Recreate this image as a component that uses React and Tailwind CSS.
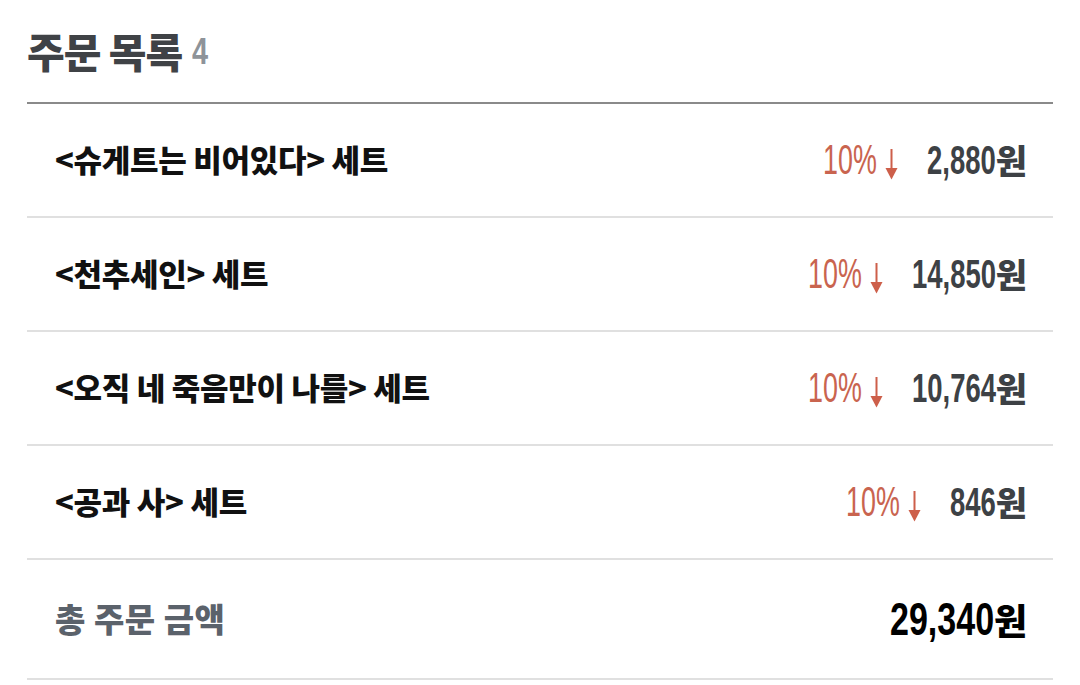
const orders = [
  { title: '<슈게트는 비어있다> 세트', rate: '10%', price: '2,880' },
  { title: '<천추세인> 세트', rate: '10%', price: '14,850' },
  { title: '<오직 네 죽음만이 나를> 세트', rate: '10%', price: '10,764' },
  { title: '<공과 사> 세트', rate: '10%', price: '846' },
];

// Arial / Liberation Sans advance widths, em units
const ADV = { ',': 0.278, '%': 0.889 };
const textWidth = (s, size, scale) =>
  [...s].reduce((sum, c) => sum + (ADV[c] ?? 0.556), 0) * size * scale;

const Narrow = ({ text, size, scale, className }) => (
  <span className="inline-block overflow-visible whitespace-nowrap" style={{ width: textWidth(text, size, scale) }}>
    <span className={`inline-block origin-left font-['Liberation_Sans',Arial,sans-serif] ${className}`}>{text}</span>
  </span>
);

const ArrowDown = () => (
  <svg width="13" height="31" viewBox="0 0 13 31" className="block">
    <rect x="5.5" y="0" width="2" height="21" fill="#cd5f4a" />
    <path d="M0.5 19 L12.5 19 L6.5 30.5 Z" fill="#cd5f4a" />
  </svg>
);

const Row = ({ title, rate, price }) => (
  <div className="flex h-[114px] items-center justify-between border-b-2 border-[#e0e0e0] pl-7 pr-[26px]">
    <span className="mb-[3px] text-[31px] font-black leading-none tracking-[-0.3px] text-[#111111]">{title}</span>
    <div className="flex items-end leading-none">
      <Narrow text={rate} size={42} scale={0.64} className="text-[42px] font-normal text-[#c9644f] scale-x-[0.64]" />
      <span className="mb-[1px] ml-2">
        <ArrowDown />
      </span>
      <span className="ml-[29px] flex items-baseline">
        <Narrow text={price} size={41} scale={0.67} className="text-[41px] font-bold text-[#3d4145] scale-x-[0.67]" />
        <span className="text-[34px] font-black text-[#3d4145]">원</span>
      </span>
    </div>
  </div>
);

const App = () => (
  <div className="h-[685px] w-[1080px] overflow-hidden bg-white font-['Noto_Sans_CJK_KR','Noto_Sans',sans-serif]">
    <div className="ml-[27px] w-[1026px]">
      <div className="flex h-[104px] items-center border-b-2 border-[#8a8a8a] pb-[2px]">
        <span className="text-[41px] font-black leading-none tracking-[-1px] text-[#3f4246]">주문 목록</span>
        <span className="ml-[10px] mt-[3px] leading-none">
          <Narrow text="4" size={37} scale={0.78} className="text-[37px] font-bold text-[#8e9399] scale-x-[0.78]" />
        </span>
      </div>
      {orders.map((o) => (
        <Row key={o.title} {...o} />
      ))}
      <div className="flex h-[120px] items-center justify-between border-b-2 border-[#e0e0e0] pl-7 pr-[26px]">
        <span className="mb-[2px] text-[33px] font-black leading-none tracking-[0.5px] text-[#5b626b]">총 주문 금액</span>
        <span className="flex items-baseline leading-none">
          <Narrow text="29,340" size={46} scale={0.74} className="text-[46px] font-bold text-black scale-x-[0.74]" />
          <span className="text-[36px] font-black text-black">원</span>
        </span>
      </div>
    </div>
  </div>
);

export default App;
